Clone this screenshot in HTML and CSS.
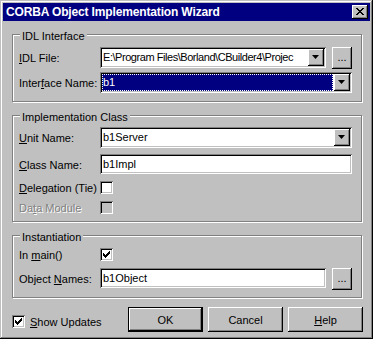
FILE: index.html
```html
<!DOCTYPE html>
<html lang="en">
<head>
  <meta charset="UTF-8">
  <title>CORBA Object Implementation Wizard</title>
  <link rel="stylesheet" href="styles.css">
</head>
<body>
  <div class="window">
    <div class="titlebar">
      <span class="title">CORBA Object Implementation Wizard</span>
      <button class="close raised">
        <svg width="8" height="7" viewBox="0 0 8 7"><path d="M0 0h2v1h-2zM6 0h2v1h-2zM1 1h2v1h-2zM5 1h2v1h-2zM2 2h4v1h-4zM3 3h2v1h-2zM2 4h4v1h-4zM1 5h2v1h-2zM5 5h2v1h-2zM0 6h2v1h-2zM6 6h2v1h-2z" fill="#000"/></svg>
      </button>
    </div>

    <div class="content">
      <!-- IDL -->
      <div class="group group-idl">
        <div class="group-title">IDL Interface</div>
        <div class="rows">
          <label class="lbl"><u>I</u>DL File:</label>
          <div class="line">
            <div class="combo sunken short">
              <span class="val path">E:\Program Files\Borland\CBuilder4\Projec</span>
              <span class="drop raised"><svg width="7" height="4" viewBox="0 0 7 4"><path d="M0 0h7L3.5 4z" fill="#000"/></svg></span>
            </div>
            <button class="btn raised dots">...</button>
          </div>

          <label class="lbl">Inter<u>f</u>ace Name:</label>
          <div class="combo sunken">
            <span class="val selected">b1</span>
            <span class="drop raised"><svg width="7" height="4" viewBox="0 0 7 4"><path d="M0 0h7L3.5 4z" fill="#000"/></svg></span>
          </div>
        </div>
      </div>

      <!-- Implementation -->
      <div class="group group-impl">
        <div class="group-title">Implementation Class</div>
        <div class="rows">
          <label class="lbl"><u>U</u>nit Name:</label>
          <div class="combo sunken">
            <span class="val">b1Server</span>
            <span class="drop raised"><svg width="7" height="4" viewBox="0 0 7 4"><path d="M0 0h7L3.5 4z" fill="#000"/></svg></span>
          </div>

          <label class="lbl"><u>C</u>lass Name:</label>
          <div class="edit sunken"><span class="val">b1Impl</span></div>

          <label class="lbl"><u>D</u>elegation (Tie)</label>
          <span class="check sunken"></span>

          <label class="lbl disabled">Da<u>t</u>a Module</label>
          <span class="check sunken off"></span>
        </div>
      </div>

      <!-- Instantiation -->
      <div class="group group-inst">
        <div class="group-title">Instantiation</div>
        <div class="rows">
          <label class="lbl">In <u>m</u>ain()</label>
          <span class="check sunken">
            <svg width="13" height="13" viewBox="0 0 13 13"><path d="M9 3h1v1h-1zM8 4h2v1h-2zM3 5h1v1H3zM7 5h3v1H7zM3 6h2v1H3zM6 6h3v1H6zM3 7h5v1H3zM4 8h3v1H4zM5 9h1v1H5z" fill="#000"/></svg>
          </span>

          <label class="lbl">Object <u>N</u>ames:</label>
          <div class="line">
            <div class="edit sunken short"><span class="val">b1Object</span></div>
            <button class="btn raised dots">...</button>
          </div>
        </div>
      </div>

      <div class="footer">
        <label class="show-updates">
          <span class="check sunken">
            <svg width="13" height="13" viewBox="0 0 13 13"><path d="M9 3h1v1h-1zM8 4h2v1h-2zM3 5h1v1H3zM7 5h3v1H7zM3 6h2v1H3zM6 6h3v1H6zM3 7h5v1H3zM4 8h3v1H4zM5 9h1v1H5z" fill="#000"/></svg>
          </span>
          <span><u>S</u>how Updates</span>
        </label>
        <button class="btn raised push default">OK</button>
        <button class="btn raised push">Cancel</button>
        <button class="btn raised push"><u>H</u>elp</button>
      </div>
    </div>
  </div>
</body>
</html>
```

FILE: styles.css
```css
* {
  margin: 0;
  padding: 0;
  box-sizing: border-box;
}

body {
  margin: 0;
  background-color: #c0c0c0;
  font-family: 'Liberation Sans', Arial, sans-serif;
  font-size: 11px;
  color: #000;
}

u {
  text-decoration: underline;
  text-underline-offset: 1px;
}

/* bevels */
.raised {
  box-shadow: inset -1px -1px #000, inset 1px 1px #fff, inset -2px -2px #808080;
}

.sunken {
  box-shadow: inset 1px 1px #808080, inset -1px -1px #fff, inset 2px 2px #000, inset -2px -2px #c0c0c0;
}

.window {
  width: 373px;
  height: 339px;
  padding: 3px;
  background-color: #c0c0c0;
  box-shadow: inset -1px -1px #000, inset 1px 1px #c0c0c0, inset -2px -2px #808080, inset 2px 2px #fff;
}

.titlebar {
  height: 18px;
  background-color: #000080;
  color: #fff;
  display: flex;
  align-items: center;
  justify-content: space-between;
  padding: 0 2px 0 3px;
}

.title {
  font-weight: bold;
  font-size: 12px;
  letter-spacing: -0.15px;
}

.close {
  width: 16px;
  height: 14px;
  border: none;
  background-color: #c0c0c0;
  display: flex;
  align-items: center;
  justify-content: center;
  padding: 0 1px 1px 0;
}

.close svg {
  display: block;
}

.content {
  padding: 13px 0 0 9px;
}

/* group boxes */
.group {
  width: 350px;
  border: 1px solid #808080;
  box-shadow: inset 1px 1px #fff, 1px 1px #fff;
  padding: 0 9px 7px 6px;
}

.group + .group {
  margin-top: 13px;
}

.group-title {
  display: table;
  height: 13px;
  line-height: 13px;
  margin: -5px 0 0 1px;
  padding: 0 2px;
  background-color: #c0c0c0;
}

.rows {
  display: grid;
  grid-template-columns: 81px 252px;
  align-items: center;
}

.group-idl {
  padding-bottom: 8px;
}

.group-idl .rows {
  margin-top: 4px;
  grid-template-rows: 22px 21px;
  row-gap: 3px;
}

.group-impl .rows {
  margin-top: 3px;
  grid-template-rows: 21px 21px 14px 13px;
  row-gap: 6px;
}

.group-inst .rows {
  margin-top: 4px;
  grid-template-rows: 13px 22px;
  row-gap: 7px;
}

.lbl {
  white-space: nowrap;
}

.lbl.disabled {
  color: #808080;
  text-shadow: 1px 1px #fff;
}

.line {
  display: flex;
  align-items: center;
  gap: 6px;
}

/* fields */
.combo, .edit {
  background-color: #fff;
  display: flex;
  align-items: stretch;
  padding: 2px;
  height: 21px;
  width: 252px;
}

.edit {
  height: 20px;
  align-self: start;
}

.short {
  width: 226px;
}

.group-idl .line .combo {
  align-self: start;
}

.val {
  flex: 1;
  padding-left: 1px;
  white-space: nowrap;
  overflow: hidden;
  line-height: 16px;
}

.val.path {
  letter-spacing: -0.45px;
}

.val.selected {
  background-color: #000080;
  color: #fff;
  outline: 1px dotted #fff;
  outline-offset: -1px;
  margin: 0 1px 0 0;
  padding-left: 1px;
}

.drop {
  width: 16px;
  background-color: #c0c0c0;
  display: flex;
  align-items: center;
  justify-content: center;
  padding: 0 1px 1px 0;
}

.drop svg {
  display: block;
}

/* checkboxes */
.check {
  display: block;
  width: 13px;
  height: 13px;
  background-color: #fff;
  align-self: start;
}

.check.off {
  background-color: #c0c0c0;
}

.check svg {
  display: block;
}

/* buttons */
.btn {
  border: none;
  background-color: #c0c0c0;
  font-family: inherit;
  font-size: 11px;
  color: #000;
}

.dots {
  width: 20px;
  height: 22px;
  padding-bottom: 2px;
}

.footer {
  display: flex;
  align-items: flex-start;
  margin-top: 9px;
  gap: 5px;
}

.show-updates {
  display: flex;
  align-items: center;
  gap: 5px;
  width: 111px;
  margin-top: 8px;
}

.push {
  width: 75px;
  height: 25px;
}

.default {
  border: 1px solid #000;
}
```
